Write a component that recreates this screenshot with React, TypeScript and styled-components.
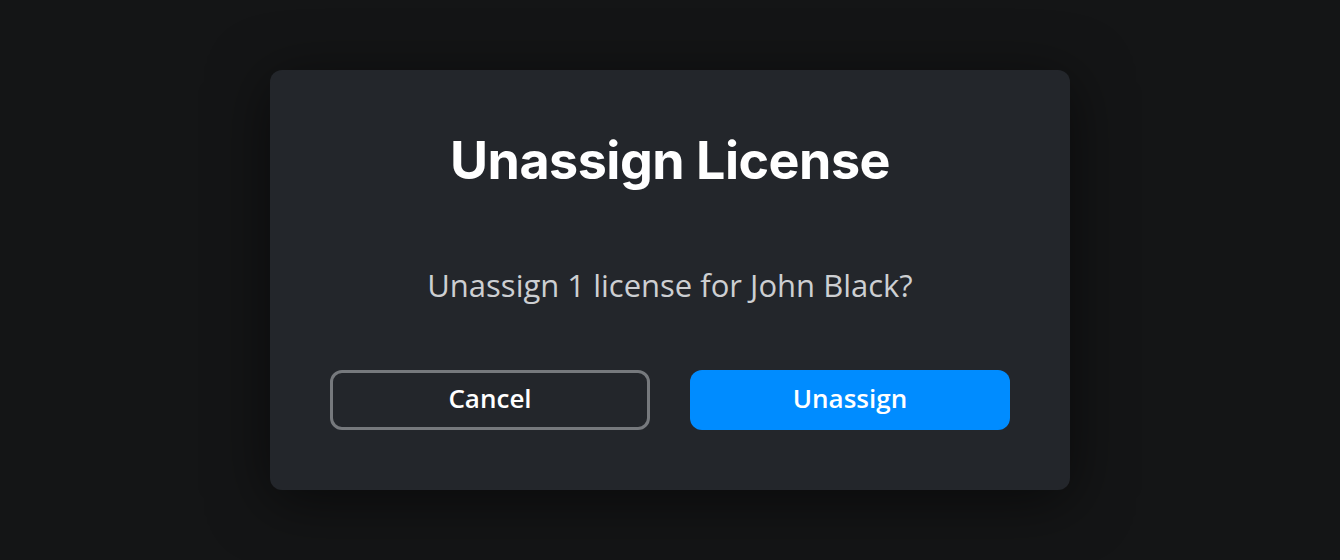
import styled, { createGlobalStyle } from "styled-components";

const GlobalStyle = createGlobalStyle`
  html, body {
    margin: 0;
    padding: 0;
    background: #141516;
  }
  #root {
    height: 100vh;
  }
`;

const Backdrop = styled.div`
  height: 100vh;
  display: flex;
  align-items: center;
  justify-content: center;
  background: #141516;
`;

const Dialog = styled.div`
  width: 800px;
  height: 420px;
  box-sizing: border-box;
  padding: 59px 60px 60px;
  background: #23262b;
  border-radius: 12px;
  box-shadow: 0 10px 60px rgba(0, 0, 0, 0.55);
  display: flex;
  flex-direction: column;
  align-items: center;
`;

const Title = styled.h1`
  margin: 0;
  font-family: Inter, "Liberation Sans", sans-serif;
  font-weight: 700;
  font-size: 52px;
  line-height: 64px;
  color: #ffffff;
  letter-spacing: -0.5px;
`;

const Message = styled.p`
  margin: 72px 0 0;
  font-family: "Open Sans", "Liberation Sans", sans-serif;
  font-size: 31px;
  line-height: 40px;
  color: #cdcfd2;
`;

const Actions = styled.div`
  margin-top: auto;
  width: 100%;
  display: grid;
  grid-template-columns: 1fr 1fr;
  gap: 40px;
`;

const Button = styled.button<{ $primary?: boolean }>`
  height: 60px;
  box-sizing: border-box;
  padding: 0 0 4px;
  border-radius: 12px;
  font-family: "Open Sans", "Liberation Sans", sans-serif;
  font-weight: 600;
  font-size: 26px;
  color: #ffffff;
  cursor: pointer;
  background: ${({ $primary }) => ($primary ? "#008cff" : "transparent")};
  border: ${({ $primary }) => ($primary ? "none" : "3px solid #76797d")};
`;

export default function App() {
  return (
    <>
      <GlobalStyle />
      <Backdrop>
        <Dialog>
          <Title>Unassign License</Title>
          <Message>Unassign 1 license for John Black?</Message>
          <Actions>
            <Button>Cancel</Button>
            <Button $primary>Unassign</Button>
          </Actions>
        </Dialog>
      </Backdrop>
    </>
  );
}
